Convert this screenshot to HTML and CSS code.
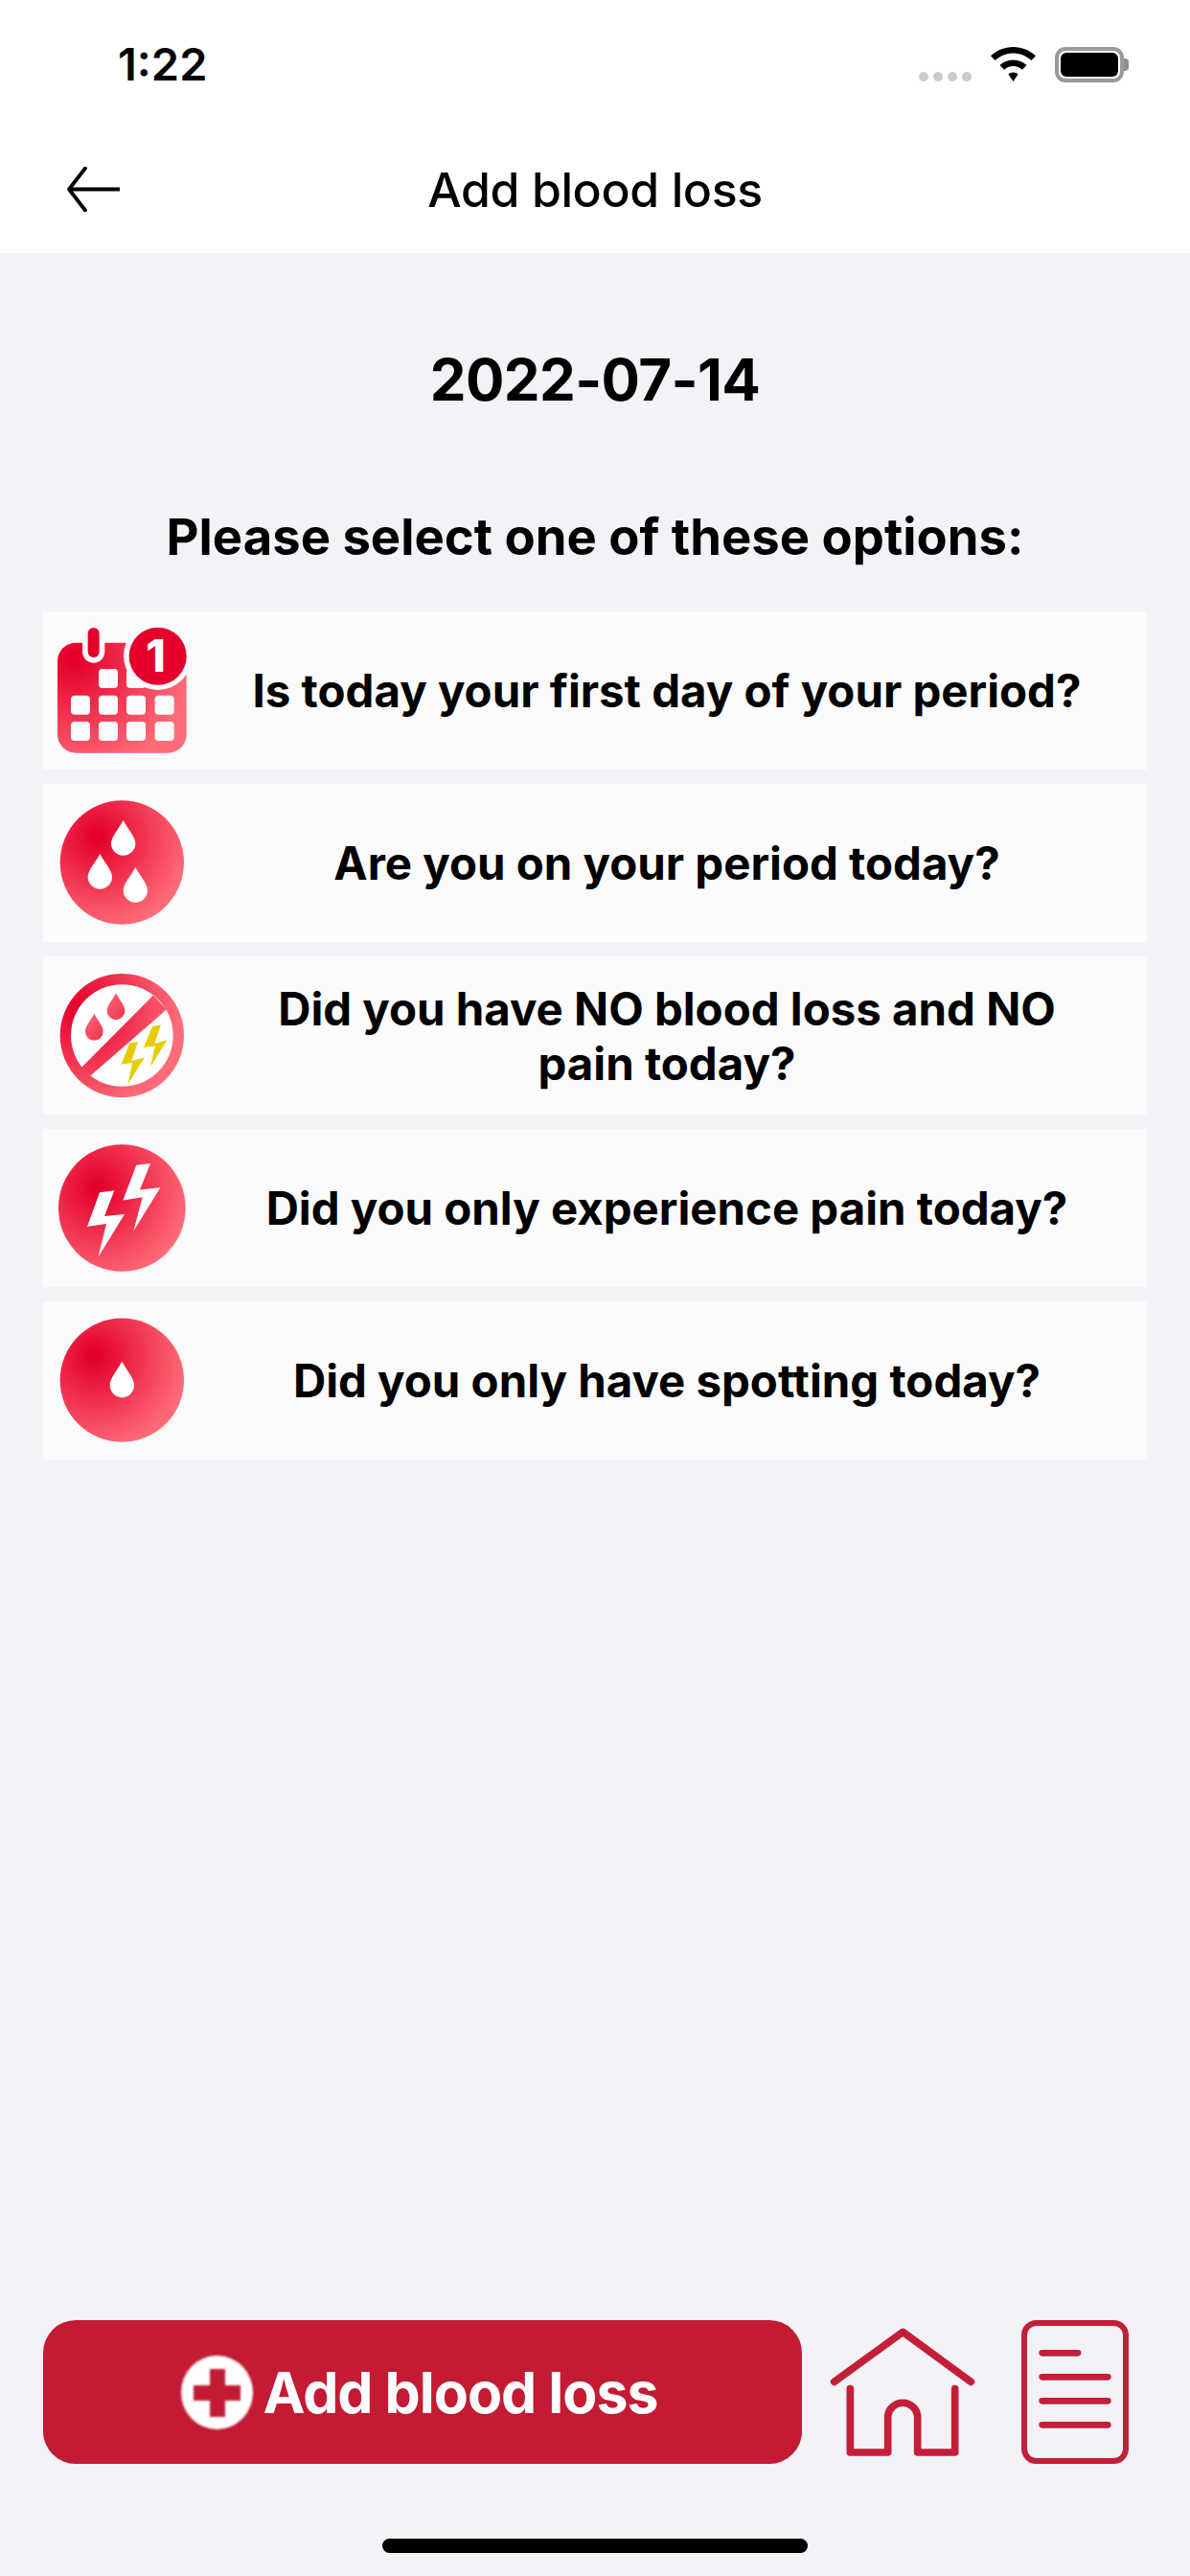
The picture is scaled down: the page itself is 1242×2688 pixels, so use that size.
FILE: index.html
```html
<!DOCTYPE html>
<html lang="en">
<head>
<meta charset="utf-8">
<title>Add blood loss</title>
<link rel="stylesheet" href="styles.css">
</head>
<body>
<svg class="defs" width="0" height="0" aria-hidden="true">
  <defs>
    <radialGradient id="gCal" gradientUnits="userSpaceOnUse" cx="140" cy="170" r="360">
      <stop offset="0.05" stop-color="#e4002b"/><stop offset="1" stop-color="#ff6b78"/>
    </radialGradient>
    <radialGradient id="g2" gradientUnits="userSpaceOnUse" cx="215" cy="730" r="290">
      <stop offset="0.05" stop-color="#e4002b"/><stop offset="1" stop-color="#ff6b78"/>
    </radialGradient>
    <radialGradient id="g3" gradientUnits="userSpaceOnUse" cx="170" cy="190" r="300">
      <stop offset="0.05" stop-color="#e4002b"/><stop offset="1" stop-color="#ff6b78"/>
    </radialGradient>
    <radialGradient id="g4" gradientUnits="userSpaceOnUse" cx="215" cy="725" r="290">
      <stop offset="0.05" stop-color="#e4002b"/><stop offset="1" stop-color="#ff6b78"/>
    </radialGradient>
    <radialGradient id="g5" gradientUnits="userSpaceOnUse" cx="205" cy="1235" r="290">
      <stop offset="0.05" stop-color="#e4002b"/><stop offset="1" stop-color="#ff6b78"/>
    </radialGradient>
    <path id="drop" d="M0 0C14 27 38 52 38 72A38 38 0 0 1-38 72C-38 52-14 27 0 0Z"/>
  </defs>
</svg>

<header class="status">
  <span class="time">1:22</span>
  <div class="status-icons">
    <div class="signal"><i></i><i></i><i></i><i></i></div>
    <svg class="wifi" viewBox="0 0 47 36"><path d="M23.5 0C32.5 0 40.700 3.500 47 9.300L42.500 14C37.400 9.300 30.800 6.400 23.500 6.400S9.600 9.300 4.500 14L0 9.300C6.300 3.500 14.500 0 23.500 0ZM23.500 13.500C28.900 13.500 33.800 15.600 37.500 19L33 23.700C30.500 21.400 27.200 20 23.500 20S16.500 21.400 14 23.700L9.500 19C13.200 15.600 18.100 13.500 23.500 13.500ZM23.500 26.500C25.500 26.500 27.200 27.200 28.600 28.400L23.500 36L18.400 28.400C19.800 27.200 21.500 26.500 23.500 26.500Z"/></svg>
    <div class="battery"><div class="battery-fill"></div></div>
    <div class="battery-nub"></div>
  </div>
</header>

<nav class="navbar">
  <svg class="back" viewBox="0 0 55 47"><path d="M19 1.500L2 23.500L19 45.500M2 23.500H55" fill="none" stroke="#000" stroke-width="3.800" stroke-linecap="round" stroke-linejoin="round"/></svg>
  <h1 class="nav-title">Add blood loss</h1>
</nav>

<main class="content">
  <h2 class="date">2022-07-14</h2>
  <h3 class="prompt">Please select one of these options:</h3>
  <ul class="options">
    <li class="option">
      <svg class="option-icon" viewBox="45 24 450 495" preserveAspectRatio="none">
        <rect x="90" y="122" width="404" height="345" rx="58" fill="url(#gCal)"/>
        <rect x="168" y="60" width="70" height="125" rx="35" fill="#fbfbfc"/>
        <rect x="185" y="75" width="36" height="93" rx="18" fill="#e4002b"/>
        <g fill="#fbfbfc">
          <rect x="219" y="204" width="60" height="60" rx="12"/><rect x="306" y="204" width="60" height="60" rx="12"/>
          <rect x="132" y="287" width="60" height="60" rx="12"/><rect x="219" y="287" width="60" height="60" rx="12"/><rect x="306" y="287" width="60" height="60" rx="12"/><rect x="395" y="287" width="60" height="60" rx="12"/>
          <rect x="132" y="369" width="60" height="60" rx="12"/><rect x="219" y="369" width="60" height="60" rx="12"/><rect x="306" y="369" width="60" height="60" rx="12"/><rect x="395" y="369" width="60" height="60" rx="12"/>
          <circle cx="404" cy="163" r="107"/>
        </g>
        <circle cx="404" cy="164" r="90" fill="#e4002b"/>
        <text class="badge-num" x="398" y="214" text-anchor="middle">1</text>
      </svg>
      <span class="option-text">Is today your first day of your period?</span>
    </li>
    <li class="option">
      <svg class="option-icon" viewBox="45 564 450 495" preserveAspectRatio="none">
        <circle cx="292" cy="810" r="194" fill="url(#g2)"/>
        <g fill="#fff">
          <use href="#drop" x="296" y="678"/><use href="#drop" x="223" y="783"/><use href="#drop" x="334" y="825"/>
        </g>
      </svg>
      <span class="option-text">Are you on your period today?</span>
    </li>
    <li class="option">
      <svg class="option-icon" viewBox="45 22 450 480" preserveAspectRatio="none">
        <ellipse cx="292" cy="262" rx="194" ry="188" fill="url(#g3)"/>
        <ellipse cx="292" cy="262" rx="160" ry="155" fill="#fff"/>
        <polygon points="150,374 390,140 432,183 177,398" fill="url(#g3)"/>
        <g fill="url(#g3)">
          <use href="#drop" transform="translate(273 133) scale(.74)"/>
          <use href="#drop" transform="translate(205 196) scale(.74)"/>
        </g>
        <g fill="#e6cc00">
          <polygon points="316,285 342,281 322,340 363,328 310,410 325,345 289,350"/>
          <polygon points="387,234 414,229 394,287 433,276 381,357 396,294 360,298"/>
        </g>
      </svg>
      <span class="option-text">Did you have NO blood loss and NO pain today?</span>
    </li>
    <li class="option">
      <svg class="option-icon" viewBox="45 545 450 480" preserveAspectRatio="none">
        <ellipse cx="292" cy="785" rx="199" ry="193" fill="url(#g4)"/>
        <g fill="#fff">
          <polygon points="222,738 268,732 237,810 300,804 217,935 243,833 183,842"/>
          <polygon points="337,655 381,650 348,730 412,723 328,855 356,752 295,762"/>
        </g>
      </svg>
      <span class="option-text">Did you only experience pain today?</span>
    </li>
    <li class="option">
      <svg class="option-icon" viewBox="45 1068 450 480" preserveAspectRatio="none">
        <ellipse cx="292" cy="1307" rx="194" ry="188" fill="url(#g5)"/>
        <use href="#drop" x="292" y="1250" fill="#fff"/>
      </svg>
      <span class="option-text">Did you only have spotting today?</span>
    </li>
  </ul>
</main>

<footer class="footer">
  <button class="add-btn" type="button">
    <svg class="plus" viewBox="0 0 75 77">
      <ellipse cx="37.500" cy="38.500" rx="37.500" ry="38.500" fill="#fff"/>
      <path d="M30 14H46V31H62V47H46V64H30V47H13V31H30Z" fill="#c21b33"/>
    </svg>
    <span>Add blood loss</span>
  </button>
  <svg class="home-icon" viewBox="180 93 495 450" fill="none" stroke="#c41e38" stroke-linecap="round" stroke-linejoin="round">
    <path d="M212 286L427 130L640 286" stroke-width="23"/>
    <path d="M262 308V507H380V392A47 47 0 0 1 473 392V507H590V308" stroke-width="23"/>
  </svg>
  <svg class="doc-icon" viewBox="798 93 336 450" fill="none" stroke="#c41e38" stroke-linecap="round">
    <rect x="807" y="102" width="318" height="432" rx="38" stroke-width="18"/>
    <path d="M863 196H975M863 271H1069M863 346H1069M863 421H1069" stroke-width="20"/>
  </svg>
</footer>
<div class="home-bar"></div>
</body>
</html>
```

FILE: styles.css
```css
* { box-sizing: border-box; margin: 0; padding: 0; }
html, body { width: 1242px; height: 2688px; }
body {
  display: flex;
  flex-direction: column;
  background: #f2f2f7;
  font-family: Inter, "Liberation Sans", sans-serif;
  color: #000;
  overflow: hidden;
}
.defs { position: absolute; }

.status {
  height: 132px;
  background: #fff;
  display: flex;
  justify-content: space-between;
  padding: 49px 64px 0 123px;
}
.time { font-size: 47px; font-weight: 600; line-height: 36px; }
.status-icons { display: flex; align-items: flex-start; height: 37px; }
.signal { display: flex; gap: 5px; margin-top: 26px; margin-right: 20px; }
.signal i { width: 10px; height: 10px; border-radius: 50%; background: #cbcbcb; }
.wifi { width: 47px; height: 36px; margin-right: 20px; }
.battery { width: 72px; height: 37px; border: 4px solid #9a9a9a; border-radius: 11px; padding: 2px; }
.battery-fill { width: 100%; height: 100%; background: #000; border-radius: 6px; }
.battery-nub { width: 5px; height: 13px; margin-top: 12px; background: #8e8e8e; border-radius: 0 4px 4px 0; }

.navbar {
  height: 132px;
  background: #fff;
  position: relative;
  display: flex;
  align-items: center;
  justify-content: center;
}
.back { position: absolute; left: 70px; top: 42px; width: 55px; height: 47px; }
.nav-title { font-size: 50px; font-weight: 500; letter-spacing: -0.4px; line-height: 60px; }

.content { flex: 1; padding: 0 45px; }
.date { font-size: 60px; font-weight: 700; letter-spacing: -0.6px; text-align: center; line-height: 70px; margin-top: 97px; }
.prompt { font-size: 52.600px; font-weight: 650; text-align: center; line-height: 60px; margin-top: 99px; }
.options { list-style: none; margin-top: 48px; display: flex; flex-direction: column; gap: 15px; }
.option { height: 165px; background: #fbfbfc; display: flex; align-items: center; }
.option-icon { width: 150px; height: 165px; flex: none; }
.option-text { flex: 1; padding: 0 55px; text-align: center; font-size: 47.400px; font-weight: 650; line-height: 57px; }
.badge-num { font-family: Inter, sans-serif; font-size: 140px; font-weight: 800; fill: #fff; }

.footer { display: flex; align-items: center; padding-left: 45px; gap: 23px; height: 150px; margin-bottom: 117px; }
.add-btn {
  width: 792px;
  height: 150px;
  border: none;
  border-radius: 34px;
  background: #c21b33;
  color: #fff;
  display: flex;
  align-items: center;
  justify-content: center;
  gap: 10px;
  padding-right: 6px;
  font-family: inherit;
  font-size: 59px;
  font-weight: 700;
  letter-spacing: -1px;
}
.plus { width: 75px; height: 77px; filter: blur(0.8px); }
.home-icon { width: 165px; height: 150px; flex: none; }
.doc-icon { width: 112px; height: 150px; flex: none; margin-left: 18px; }

.home-bar { position: absolute; left: 399px; top: 2649px; width: 444px; height: 15px; background: #000; border-radius: 8px; }
```
